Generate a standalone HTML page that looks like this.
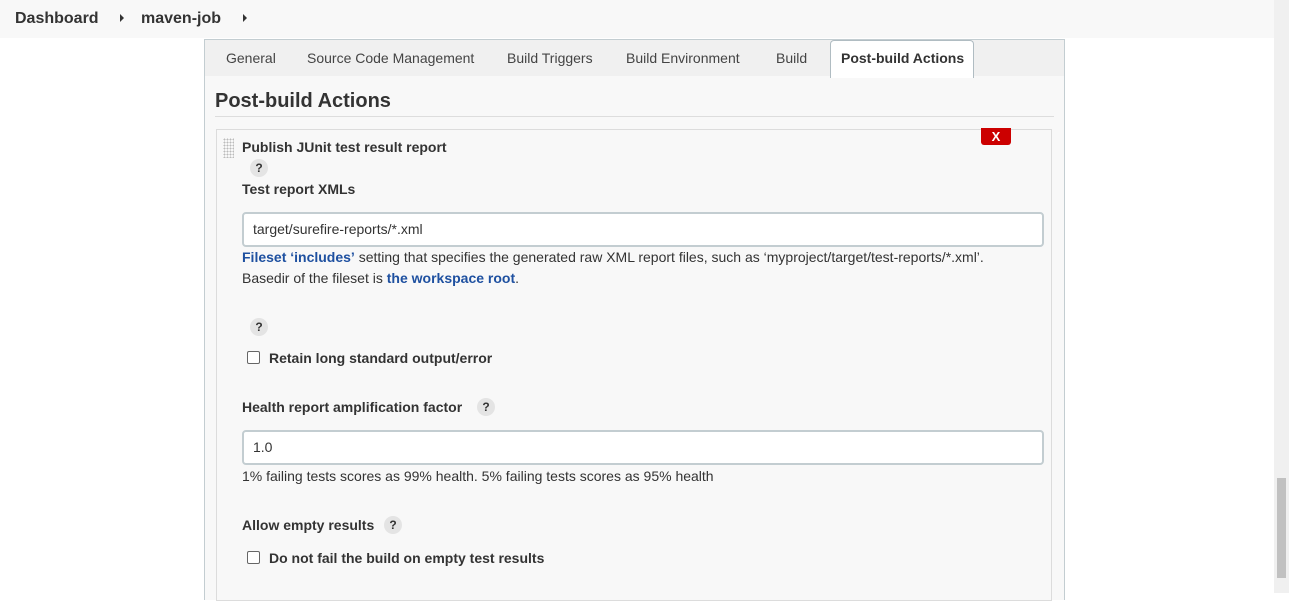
<!DOCTYPE html><html><head><style>
body{margin:0;width:1289px;height:593px;overflow:hidden;background:#fff;font-family:"Liberation Sans",sans-serif;color:#333;position:relative}
.a{position:absolute}
.hdr{left:0;top:0;width:1274px;height:38px;background:#f8f8f8}
.b{font-weight:bold}
.q{display:inline-block;width:18px;height:18px;border-radius:9px;background:#e4e4e4;font-size:12px;font-weight:bold;text-align:center;line-height:18px;color:#333}
.inp{background:#fff;border:2px solid #c3cdd1;border-radius:4px;box-sizing:border-box;font-size:14px;padding-left:9px;line-height:30px}
.cb{width:11px;height:11px;border:1px solid #666;border-radius:2px;background:#fff}
.lnk{color:#1e50a0;font-weight:bold}
</style></head><body>
<div class="a hdr"></div>
<div class="a b" style="left:15px;top:10px;font-size:16px;color:#333">Dashboard</div>
<div class="a" style="left:120px;top:14px;width:0;height:0;border-left:4px solid #333;border-top:4px solid transparent;border-bottom:4px solid transparent"></div>
<div class="a b" style="left:141px;top:10px;font-size:16px">maven-job</div>
<div class="a" style="left:243px;top:14px;width:0;height:0;border-left:4px solid #333;border-top:4px solid transparent;border-bottom:4px solid transparent"></div>
<div class="a" style="left:1274px;top:0;width:15px;height:593px;background:#f0f0f0"></div>
<div class="a" style="left:1277px;top:478px;width:9px;height:100px;background:#c1c1c1"></div>
<div class="a" style="left:204px;top:39px;width:859px;height:560px;background:#f8f8f8;border-left:1px solid #c3cdd1;border-right:1px solid #c3cdd1;border-top:1px solid #c3cdd1"></div>
<div class="a" style="left:205px;top:40px;width:859px;height:36px;background:#f0f0f0"></div>
<div class="a" style="left:830px;top:40px;width:142px;height:37px;background:#fff;border:1px solid #b0bcc2;border-bottom:none;border-radius:4px 4px 0 0"></div>
<div class="a" style="top:50px;font-size:14px;color:#444;left:226px">General</div>
<div class="a" style="top:50px;font-size:14px;color:#444;left:307px">Source Code Management</div>
<div class="a" style="top:50px;font-size:14px;color:#444;left:507px">Build Triggers</div>
<div class="a" style="top:50px;font-size:14px;color:#444;left:626px">Build Environment</div>
<div class="a" style="top:50px;font-size:14px;color:#444;left:776px">Build</div>
<div class="a b" style="top:50px;font-size:14px;color:#333;left:841px">Post-build Actions</div>
<div class="a b" style="left:215px;top:90px;font-size:20px">Post-build Actions</div>
<div class="a" style="left:215px;top:116px;width:839px;height:1px;background:#ddd"></div>
<div class="a" style="left:216px;top:129px;width:834px;height:470px;border:1px solid #dcdcdc"></div>
<div class="a" style="left:223px;top:138px;width:11px;height:20px;background-image:radial-gradient(#bbb 40%,transparent 45%);background-size:3px 3px"></div>
<div class="a" style="left:981px;top:128px;width:30px;height:17px;background:#cc0000;border-radius:0 0 3px 3px;color:#fff;font-weight:bold;font-size:13px;text-align:center;line-height:17px">X</div>
<div class="a b" style="left:242px;top:139px;font-size:14px">Publish JUnit test result report</div>
<div class="a q" style="left:250px;top:159px">?</div>
<div class="a b" style="left:242px;top:181px;font-size:14px">Test report XMLs</div>
<div class="a inp" style="left:242px;top:212px;width:802px;height:35px">target/surefire-reports/*.xml</div>
<div class="a" style="left:242px;top:247px;font-size:14px;line-height:21px;width:800px"><span class="lnk">Fileset ‘includes’</span> setting that specifies the generated raw XML report files, such as ‘myproject/target/test-reports/*.xml’.<br>Basedir of the fileset is <span class="lnk">the workspace root</span>.</div>
<div class="a q" style="left:250px;top:318px">?</div>
<div class="a cb" style="left:247px;top:351px"></div>
<div class="a b" style="left:269px;top:350px;font-size:14px">Retain long standard output/error</div>
<div class="a b" style="left:242px;top:399px;font-size:14px">Health report amplification factor</div>
<div class="a q" style="left:477px;top:398px">?</div>
<div class="a inp" style="left:242px;top:430px;width:802px;height:35px">1.0</div>
<div class="a" style="left:242px;top:468px;font-size:14px">1% failing tests scores as 99% health. 5% failing tests scores as 95% health</div>
<div class="a b" style="left:242px;top:517px;font-size:14px">Allow empty results</div>
<div class="a q" style="left:384px;top:516px">?</div>
<div class="a cb" style="left:247px;top:551px"></div>
<div class="a b" style="left:269px;top:550px;font-size:14px">Do not fail the build on empty test results</div>
</body></html>
